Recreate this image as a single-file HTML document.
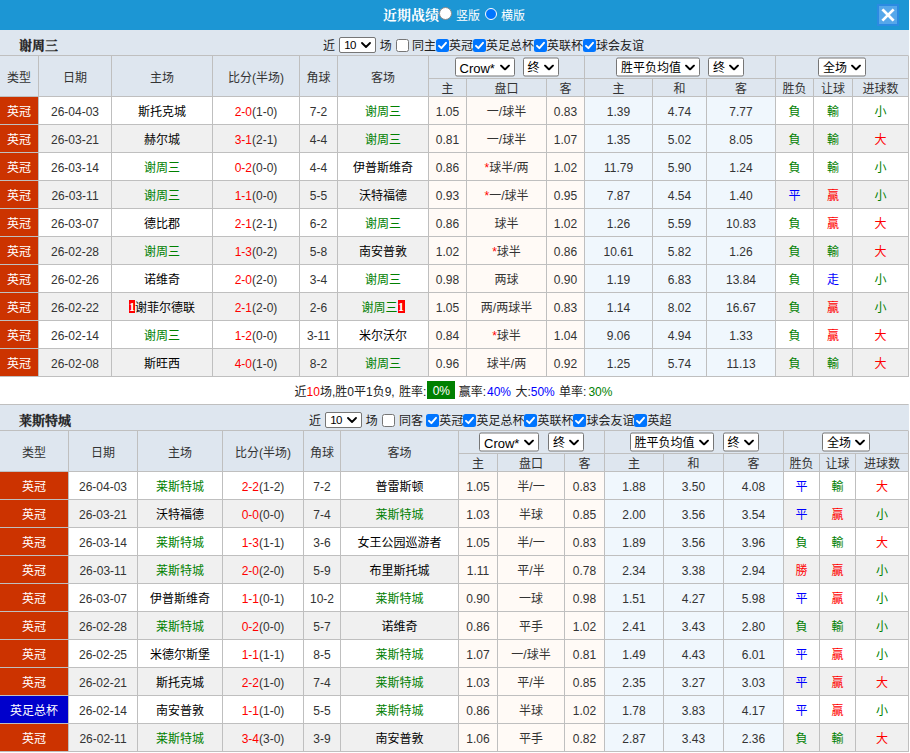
<!DOCTYPE html>
<html lang="zh-CN"><head><meta charset="utf-8"><title>近期战绩</title>
<style>
html,body{margin:0;padding:0;background:#fff;}
body{width:910px;height:753px;overflow:hidden;font-family:"Liberation Sans","Noto Sans CJK SC",sans-serif;font-size:12px;color:#333;}
.bar{position:relative;width:909px;height:30px;background:#1c96d4;color:#fff;}
.bar .bt{position:absolute;left:383px;top:1px;line-height:29px;font-size:14px;font-weight:bold;font-family:"Liberation Serif","Noto Serif CJK SC",serif;}
.bar .rd{position:absolute;top:8px;width:12px;height:12px;border-radius:50%;background:#fff;box-sizing:border-box;}
.bar .rd:nth-of-type(2){left:439px;top:7px;width:13px;height:13px;}
.bar .rd.on{left:485px;border:1.5px solid #fff;background:#0075ff;box-shadow:0 0 0 0 #0075ff;}
.bar .rl{position:absolute;top:1px;line-height:30px;font-size:12px;}
.bar .rl:nth-of-type(3){left:456px;}
.bar .rl:nth-of-type(5){left:501px;}
.bar .close{position:absolute;left:877px;top:4px;width:18px;height:18px;border:2px solid #2b8ae2;background:#56a7ea;}
.bar .close svg{display:block;}
table.t{border-collapse:separate;border-spacing:0;table-layout:fixed;width:909px;}
table.t td,table.t th{border-right:1px solid #bfbfbf;border-bottom:1px solid #bfbfbf;padding:0;text-align:center;font-weight:normal;overflow:hidden;white-space:nowrap;box-sizing:border-box;}
table.tb tr.ttl td{border-top:1px solid #bfbfbf;}
tr.ttl td{height:26px;background:#dee6ef;border-right-color:#dee6ef;text-align:left !important;position:relative;}
table.tb tr.ttl td{height:27px;}
tr.ttl .nm{position:absolute;left:19px;top:3px;line-height:25px;font-size:13px;font-weight:bold;color:#222;font-family:"Liberation Serif","Noto Serif CJK SC",serif;-webkit-text-stroke:0.3px #222;}
tr.ttl .flt{position:absolute;top:4px;line-height:25px;white-space:pre;color:#222;}
tr.h1 th{height:23px;background:#dee6ef;}
tr.h1 th[rowspan]{height:41px;}
tr.h2 th{height:18px;background:#dee6ef;}
tr.d td{height:28px;}
tr.e td{background:#f0f0f0;}
tr.d td.c1{background:#fffaf6;}
tr.d td.c2{background:#f0f7fd;}
td.ty{background:#cc3300 !important;color:#fff;}
td.ty.blue{background:#0000cc !important;}
td.tm.k,td.k{color:#000;}
.g{color:#008000;}.r{color:#f00;}.b{color:#00f;}.g2{color:#008000;}
.rc{display:inline-block;width:6px;height:13px;line-height:14px;vertical-align:middle;position:relative;top:-2px;background:#f00;color:#fff;font-weight:bold;font-size:12px;font-family:"Liberation Serif",serif;overflow:hidden;text-align:center;}
tr.sum td{height:27px;padding:2px 2px 0 0;background:#fff;border-right:none;border-bottom:none;color:#222;}
.gb{position:relative;top:-2px;display:inline-block;background:#008000;color:#fff;font-weight:normal;width:28px;margin-left:1px;height:18px;line-height:20px;text-align:center;vertical-align:middle;}
.sel{display:inline-block;box-sizing:border-box;height:19px;font-size:12px;border:1px solid #767676;border-radius:2px;transform:translateY(-0.5px);background:#fff;vertical-align:middle;position:relative;text-align:left;color:#000;line-height:19px;}
.sel .st{padding-left:4px;}
.sel .cv{position:absolute;right:4px;top:6px;}
.cb{display:inline-block;width:13px;height:13px;box-sizing:border-box;vertical-align:middle;border-radius:2.5px;position:relative;top:-1px;}
.cb.on{background:#0075ff;}
.cb.on svg{display:block;}
.cb.off{background:#fff;border:1px solid #767676;}
.cb.first{margin:0 3px 0 1px;}

.s10{font-size:11.5px;transform:none;letter-spacing:-0.7px;}
.s10 .cv{top:4px;right:4.5px;}
.cb.f2{margin-right:4px;}
tr.d td.n{padding-top:2px;}
.bar .rd{border:1px solid #8a8a8a;}
i.w1{display:inline-block;width:1px;}i.w2{display:inline-block;width:2px;}

</style></head><body>
<div class="bar"><span class="bt">近期战绩</span><span class="rd"></span><span class="rl">竖版</span><span class="rd on"></span><span class="rl">横版</span>
<span class="close"><svg width="18" height="18" viewBox="0 0 18 18"><path d="M4.3 4.3 L13.7 13.7 M13.7 4.3 L4.3 13.7" stroke="#fff" stroke-width="2.7" stroke-linecap="square" fill="none"/></svg></span></div>
<table class="t"><colgroup><col style="width:39px"><col style="width:73px"><col style="width:101px"><col style="width:87px"><col style="width:38px"><col style="width:91px"><col style="width:38px"><col style="width:80px"><col style="width:38px"><col style="width:68px"><col style="width:54px"><col style="width:69px"><col style="width:38px"><col style="width:39px"><col style="width:56px"></colgroup>
<tr class="ttl"><td colspan="15"><span class="nm">谢周三</span><span class="flt" style="left:323px">近 <span class="sel s10" style="width:37px;height:16px;line-height:14px;margin:0 0 0 1px;top:-2px"><span class="st">10</span><svg class="cv" width="10" height="6" viewBox="0 0 10 6"><path d="M1 1 L5 5 L9 1" fill="none" stroke="#000" stroke-width="1.8" stroke-linecap="round" stroke-linejoin="round"/></svg></span> 场 <span class="cb off first"></span>同主<span class="cb on"><svg width="13" height="13" viewBox="0 0 13 13"><path d="M3 6.8 L5.4 9.2 L10 3.8" fill="none" stroke="#fff" stroke-width="1.9" stroke-linecap="round" stroke-linejoin="round"/></svg></span>英冠<span class="cb on"><svg width="13" height="13" viewBox="0 0 13 13"><path d="M3 6.8 L5.4 9.2 L10 3.8" fill="none" stroke="#fff" stroke-width="1.9" stroke-linecap="round" stroke-linejoin="round"/></svg></span>英足总杯<span class="cb on"><svg width="13" height="13" viewBox="0 0 13 13"><path d="M3 6.8 L5.4 9.2 L10 3.8" fill="none" stroke="#fff" stroke-width="1.9" stroke-linecap="round" stroke-linejoin="round"/></svg></span>英联杯<span class="cb on"><svg width="13" height="13" viewBox="0 0 13 13"><path d="M3 6.8 L5.4 9.2 L10 3.8" fill="none" stroke="#fff" stroke-width="1.9" stroke-linecap="round" stroke-linejoin="round"/></svg></span>球会友谊</span></td></tr>
<tr class="h1"><th rowspan="2">类型</th><th rowspan="2">日期</th><th rowspan="2">主场</th><th rowspan="2">比分(半场)</th><th rowspan="2">角球</th><th rowspan="2">客场</th><th colspan="3"><span class="sel" style="width:60px;font-size:13px"><span class="st">Crow*</span><svg class="cv" width="10" height="6" viewBox="0 0 10 6"><path d="M1 1 L5 5 L9 1" fill="none" stroke="#000" stroke-width="1.8" stroke-linecap="round" stroke-linejoin="round"/></svg></span><span class="sel" style="width:36px;margin-left:8px"><span class="st">终</span><svg class="cv" width="10" height="6" viewBox="0 0 10 6"><path d="M1 1 L5 5 L9 1" fill="none" stroke="#000" stroke-width="1.8" stroke-linecap="round" stroke-linejoin="round"/></svg></span></th><th colspan="3"><span class="sel" style="width:84px;"><span class="st">胜平负均值</span><svg class="cv" width="10" height="6" viewBox="0 0 10 6"><path d="M1 1 L5 5 L9 1" fill="none" stroke="#000" stroke-width="1.8" stroke-linecap="round" stroke-linejoin="round"/></svg></span><span class="sel" style="width:36px;margin-left:8px"><span class="st">终</span><svg class="cv" width="10" height="6" viewBox="0 0 10 6"><path d="M1 1 L5 5 L9 1" fill="none" stroke="#000" stroke-width="1.8" stroke-linecap="round" stroke-linejoin="round"/></svg></span></th><th colspan="3"><span class="sel" style="width:48px;"><span class="st">全场</span><svg class="cv" width="10" height="6" viewBox="0 0 10 6"><path d="M1 1 L5 5 L9 1" fill="none" stroke="#000" stroke-width="1.8" stroke-linecap="round" stroke-linejoin="round"/></svg></span></th></tr>
<tr class="h2"><th>主</th><th>盘口</th><th>客</th><th>主</th><th>和</th><th>客</th><th>胜负</th><th>让球</th><th>进球数</th></tr>
<tr class="d o"><td class="ty">英冠</td><td class="n">26-04-03</td><td class="tm k">斯托克城</td><td class="n"><span class="r">2-0</span>(1-0)</td><td class="n">7-2</td><td class="tm g">谢周三</td><td class="c1 n">1.05</td><td class="c1">一/球半</td><td class="c1 n">0.83</td><td class="c2 n">1.39</td><td class="c2 n">4.74</td><td class="c2 n">7.77</td><td class="g">負</td><td class="g">輸</td><td class="g">小</td></tr>
<tr class="d e"><td class="ty">英冠</td><td class="n">26-03-21</td><td class="tm k">赫尔城</td><td class="n"><span class="r">3-1</span>(2-1)</td><td class="n">4-4</td><td class="tm g">谢周三</td><td class="c1 n">0.81</td><td class="c1">一/球半</td><td class="c1 n">1.07</td><td class="c2 n">1.35</td><td class="c2 n">5.02</td><td class="c2 n">8.05</td><td class="g">負</td><td class="g">輸</td><td class="r">大</td></tr>
<tr class="d o"><td class="ty">英冠</td><td class="n">26-03-14</td><td class="tm g">谢周三</td><td class="n"><span class="r">0-2</span>(0-0)</td><td class="n">4-4</td><td class="tm k">伊普斯维奇</td><td class="c1 n">0.86</td><td class="c1"><span class="r">*</span>球半/两</td><td class="c1 n">1.02</td><td class="c2 n">11.79</td><td class="c2 n">5.90</td><td class="c2 n">1.24</td><td class="g">負</td><td class="g">輸</td><td class="g">小</td></tr>
<tr class="d e"><td class="ty">英冠</td><td class="n">26-03-11</td><td class="tm g">谢周三</td><td class="n"><span class="r">1-1</span>(0-0)</td><td class="n">5-5</td><td class="tm k">沃特福德</td><td class="c1 n">0.93</td><td class="c1"><span class="r">*</span>一/球半</td><td class="c1 n">0.95</td><td class="c2 n">7.87</td><td class="c2 n">4.54</td><td class="c2 n">1.40</td><td class="b">平</td><td class="r">贏</td><td class="g">小</td></tr>
<tr class="d o"><td class="ty">英冠</td><td class="n">26-03-07</td><td class="tm k">德比郡</td><td class="n"><span class="r">2-1</span>(2-1)</td><td class="n">6-2</td><td class="tm g">谢周三</td><td class="c1 n">0.86</td><td class="c1">球半</td><td class="c1 n">1.02</td><td class="c2 n">1.26</td><td class="c2 n">5.59</td><td class="c2 n">10.83</td><td class="g">負</td><td class="r">贏</td><td class="r">大</td></tr>
<tr class="d e"><td class="ty">英冠</td><td class="n">26-02-28</td><td class="tm g">谢周三</td><td class="n"><span class="r">1-3</span>(0-2)</td><td class="n">5-8</td><td class="tm k">南安普敦</td><td class="c1 n">1.02</td><td class="c1"><span class="r">*</span>球半</td><td class="c1 n">0.86</td><td class="c2 n">10.61</td><td class="c2 n">5.82</td><td class="c2 n">1.26</td><td class="g">負</td><td class="g">輸</td><td class="r">大</td></tr>
<tr class="d o"><td class="ty">英冠</td><td class="n">26-02-26</td><td class="tm k">诺维奇</td><td class="n"><span class="r">2-0</span>(2-0)</td><td class="n">3-4</td><td class="tm g">谢周三</td><td class="c1 n">0.98</td><td class="c1">两球</td><td class="c1 n">0.90</td><td class="c2 n">1.19</td><td class="c2 n">6.83</td><td class="c2 n">13.84</td><td class="g">負</td><td class="b">走</td><td class="g">小</td></tr>
<tr class="d e"><td class="ty">英冠</td><td class="n">26-02-22</td><td class="tm k"><span class="rc">1</span>谢菲尔德联</td><td class="n"><span class="r">2-1</span>(2-0)</td><td class="n">2-6</td><td class="tm g">谢周三<span class="rc" style="width:7px">1</span></td><td class="c1 n">1.05</td><td class="c1">两/两球半</td><td class="c1 n">0.83</td><td class="c2 n">1.14</td><td class="c2 n">8.02</td><td class="c2 n">16.67</td><td class="g">負</td><td class="r">贏</td><td class="g">小</td></tr>
<tr class="d o"><td class="ty">英冠</td><td class="n">26-02-14</td><td class="tm g">谢周三</td><td class="n"><span class="r">1-2</span>(0-0)</td><td class="n">3-11</td><td class="tm k">米尔沃尔</td><td class="c1 n">0.84</td><td class="c1"><span class="r">*</span>球半</td><td class="c1 n">1.04</td><td class="c2 n">9.06</td><td class="c2 n">4.94</td><td class="c2 n">1.33</td><td class="g">負</td><td class="r">贏</td><td class="r">大</td></tr>
<tr class="d e"><td class="ty">英冠</td><td class="n">26-02-08</td><td class="tm k">斯旺西</td><td class="n"><span class="r">4-0</span>(1-0)</td><td class="n">8-2</td><td class="tm g">谢周三</td><td class="c1 n">0.96</td><td class="c1">球半/两</td><td class="c1 n">0.92</td><td class="c2 n">1.25</td><td class="c2 n">5.74</td><td class="c2 n">11.13</td><td class="g">負</td><td class="g">輸</td><td class="r">大</td></tr>
<tr class="sum"><td colspan="15">近<span class="r">10</span>场,胜0平1负9,<i class="w1"></i> 胜率:<span class="gb">0%</span> 赢率:<i class="w1"></i><span class="b">40%</span><i class="w1"></i> 大:<span class="b">50%</span><i class="w1"></i> 单率:<i class="w2"></i><span class="g2">30%</span></td></tr>
</table>
<table class="t tb"><colgroup><col style="width:69px"><col style="width:69px"><col style="width:85px"><col style="width:81px"><col style="width:37px"><col style="width:118px"><col style="width:39px"><col style="width:67px"><col style="width:40px"><col style="width:59px"><col style="width:60px"><col style="width:60px"><col style="width:36px"><col style="width:36px"><col style="width:53px"></colgroup>
<tr class="ttl"><td colspan="15"><span class="nm">莱斯特城</span><span class="flt" style="left:309px">近 <span class="sel s10" style="width:37px;height:16px;line-height:14px;margin:0 0 0 1px;top:-2px"><span class="st">10</span><svg class="cv" width="10" height="6" viewBox="0 0 10 6"><path d="M1 1 L5 5 L9 1" fill="none" stroke="#000" stroke-width="1.8" stroke-linecap="round" stroke-linejoin="round"/></svg></span> 场 <span class="cb off first f2"></span>同客 <span class="cb on"><svg width="13" height="13" viewBox="0 0 13 13"><path d="M3 6.8 L5.4 9.2 L10 3.8" fill="none" stroke="#fff" stroke-width="1.9" stroke-linecap="round" stroke-linejoin="round"/></svg></span>英冠<span class="cb on"><svg width="13" height="13" viewBox="0 0 13 13"><path d="M3 6.8 L5.4 9.2 L10 3.8" fill="none" stroke="#fff" stroke-width="1.9" stroke-linecap="round" stroke-linejoin="round"/></svg></span>英足总杯<span class="cb on"><svg width="13" height="13" viewBox="0 0 13 13"><path d="M3 6.8 L5.4 9.2 L10 3.8" fill="none" stroke="#fff" stroke-width="1.9" stroke-linecap="round" stroke-linejoin="round"/></svg></span>英联杯<span class="cb on"><svg width="13" height="13" viewBox="0 0 13 13"><path d="M3 6.8 L5.4 9.2 L10 3.8" fill="none" stroke="#fff" stroke-width="1.9" stroke-linecap="round" stroke-linejoin="round"/></svg></span>球会友谊<span class="cb on"><svg width="13" height="13" viewBox="0 0 13 13"><path d="M3 6.8 L5.4 9.2 L10 3.8" fill="none" stroke="#fff" stroke-width="1.9" stroke-linecap="round" stroke-linejoin="round"/></svg></span>英超</span></td></tr>
<tr class="h1"><th rowspan="2">类型</th><th rowspan="2">日期</th><th rowspan="2">主场</th><th rowspan="2">比分(半场)</th><th rowspan="2">角球</th><th rowspan="2">客场</th><th colspan="3"><span class="sel" style="width:60px;font-size:13px"><span class="st">Crow*</span><svg class="cv" width="10" height="6" viewBox="0 0 10 6"><path d="M1 1 L5 5 L9 1" fill="none" stroke="#000" stroke-width="1.8" stroke-linecap="round" stroke-linejoin="round"/></svg></span><span class="sel" style="width:36px;margin-left:9px"><span class="st">终</span><svg class="cv" width="10" height="6" viewBox="0 0 10 6"><path d="M1 1 L5 5 L9 1" fill="none" stroke="#000" stroke-width="1.8" stroke-linecap="round" stroke-linejoin="round"/></svg></span></th><th colspan="3"><span class="sel" style="width:84px;"><span class="st">胜平负均值</span><svg class="cv" width="10" height="6" viewBox="0 0 10 6"><path d="M1 1 L5 5 L9 1" fill="none" stroke="#000" stroke-width="1.8" stroke-linecap="round" stroke-linejoin="round"/></svg></span><span class="sel" style="width:36px;margin-left:9px"><span class="st">终</span><svg class="cv" width="10" height="6" viewBox="0 0 10 6"><path d="M1 1 L5 5 L9 1" fill="none" stroke="#000" stroke-width="1.8" stroke-linecap="round" stroke-linejoin="round"/></svg></span></th><th colspan="3"><span class="sel" style="width:48px;"><span class="st">全场</span><svg class="cv" width="10" height="6" viewBox="0 0 10 6"><path d="M1 1 L5 5 L9 1" fill="none" stroke="#000" stroke-width="1.8" stroke-linecap="round" stroke-linejoin="round"/></svg></span></th></tr>
<tr class="h2"><th>主</th><th>盘口</th><th>客</th><th>主</th><th>和</th><th>客</th><th>胜负</th><th>让球</th><th>进球数</th></tr>
<tr class="d o"><td class="ty">英冠</td><td class="n">26-04-03</td><td class="tm g">莱斯特城</td><td class="n"><span class="r">2-2</span>(1-2)</td><td class="n">7-2</td><td class="tm k">普雷斯顿</td><td class="c1 n">1.05</td><td class="c1">半/一</td><td class="c1 n">0.83</td><td class="c2 n">1.88</td><td class="c2 n">3.50</td><td class="c2 n">4.08</td><td class="b">平</td><td class="g">輸</td><td class="r">大</td></tr>
<tr class="d e"><td class="ty">英冠</td><td class="n">26-03-21</td><td class="tm k">沃特福德</td><td class="n"><span class="r">0-0</span>(0-0)</td><td class="n">7-4</td><td class="tm g">莱斯特城</td><td class="c1 n">1.03</td><td class="c1">半球</td><td class="c1 n">0.85</td><td class="c2 n">2.00</td><td class="c2 n">3.56</td><td class="c2 n">3.54</td><td class="b">平</td><td class="r">贏</td><td class="g">小</td></tr>
<tr class="d o"><td class="ty">英冠</td><td class="n">26-03-14</td><td class="tm g">莱斯特城</td><td class="n"><span class="r">1-3</span>(1-1)</td><td class="n">3-6</td><td class="tm k">女王公园巡游者</td><td class="c1 n">1.05</td><td class="c1">半/一</td><td class="c1 n">0.83</td><td class="c2 n">1.89</td><td class="c2 n">3.56</td><td class="c2 n">3.96</td><td class="g">負</td><td class="g">輸</td><td class="r">大</td></tr>
<tr class="d e"><td class="ty">英冠</td><td class="n">26-03-11</td><td class="tm g">莱斯特城</td><td class="n"><span class="r">2-0</span>(2-0)</td><td class="n">5-9</td><td class="tm k">布里斯托城</td><td class="c1 n">1.11</td><td class="c1">平/半</td><td class="c1 n">0.78</td><td class="c2 n">2.34</td><td class="c2 n">3.38</td><td class="c2 n">2.94</td><td class="r">勝</td><td class="r">贏</td><td class="g">小</td></tr>
<tr class="d o"><td class="ty">英冠</td><td class="n">26-03-07</td><td class="tm k">伊普斯维奇</td><td class="n"><span class="r">1-1</span>(0-1)</td><td class="n">10-2</td><td class="tm g">莱斯特城</td><td class="c1 n">0.90</td><td class="c1">一球</td><td class="c1 n">0.98</td><td class="c2 n">1.51</td><td class="c2 n">4.27</td><td class="c2 n">5.98</td><td class="b">平</td><td class="r">贏</td><td class="g">小</td></tr>
<tr class="d e"><td class="ty">英冠</td><td class="n">26-02-28</td><td class="tm g">莱斯特城</td><td class="n"><span class="r">0-2</span>(0-0)</td><td class="n">5-7</td><td class="tm k">诺维奇</td><td class="c1 n">0.86</td><td class="c1">平手</td><td class="c1 n">1.02</td><td class="c2 n">2.41</td><td class="c2 n">3.43</td><td class="c2 n">2.80</td><td class="g">負</td><td class="g">輸</td><td class="g">小</td></tr>
<tr class="d o"><td class="ty">英冠</td><td class="n">26-02-25</td><td class="tm k">米德尔斯堡</td><td class="n"><span class="r">1-1</span>(1-1)</td><td class="n">8-5</td><td class="tm g">莱斯特城</td><td class="c1 n">1.07</td><td class="c1">一/球半</td><td class="c1 n">0.81</td><td class="c2 n">1.49</td><td class="c2 n">4.43</td><td class="c2 n">6.01</td><td class="b">平</td><td class="r">贏</td><td class="g">小</td></tr>
<tr class="d e"><td class="ty">英冠</td><td class="n">26-02-21</td><td class="tm k">斯托克城</td><td class="n"><span class="r">2-2</span>(1-0)</td><td class="n">7-4</td><td class="tm g">莱斯特城</td><td class="c1 n">1.03</td><td class="c1">平/半</td><td class="c1 n">0.85</td><td class="c2 n">2.35</td><td class="c2 n">3.27</td><td class="c2 n">3.03</td><td class="b">平</td><td class="r">贏</td><td class="r">大</td></tr>
<tr class="d o"><td class="ty blue">英足总杯</td><td class="n">26-02-14</td><td class="tm k">南安普敦</td><td class="n"><span class="r">1-1</span>(1-0)</td><td class="n">5-5</td><td class="tm g">莱斯特城</td><td class="c1 n">0.86</td><td class="c1">半球</td><td class="c1 n">1.02</td><td class="c2 n">1.78</td><td class="c2 n">3.83</td><td class="c2 n">4.17</td><td class="b">平</td><td class="r">贏</td><td class="g">小</td></tr>
<tr class="d e"><td class="ty">英冠</td><td class="n">26-02-11</td><td class="tm g">莱斯特城</td><td class="n"><span class="r">3-4</span>(3-0)</td><td class="n">3-9</td><td class="tm k">南安普敦</td><td class="c1 n">1.06</td><td class="c1">平手</td><td class="c1 n">0.82</td><td class="c2 n">2.87</td><td class="c2 n">3.43</td><td class="c2 n">2.36</td><td class="g">負</td><td class="g">輸</td><td class="r">大</td></tr>
</table>
</body></html>
